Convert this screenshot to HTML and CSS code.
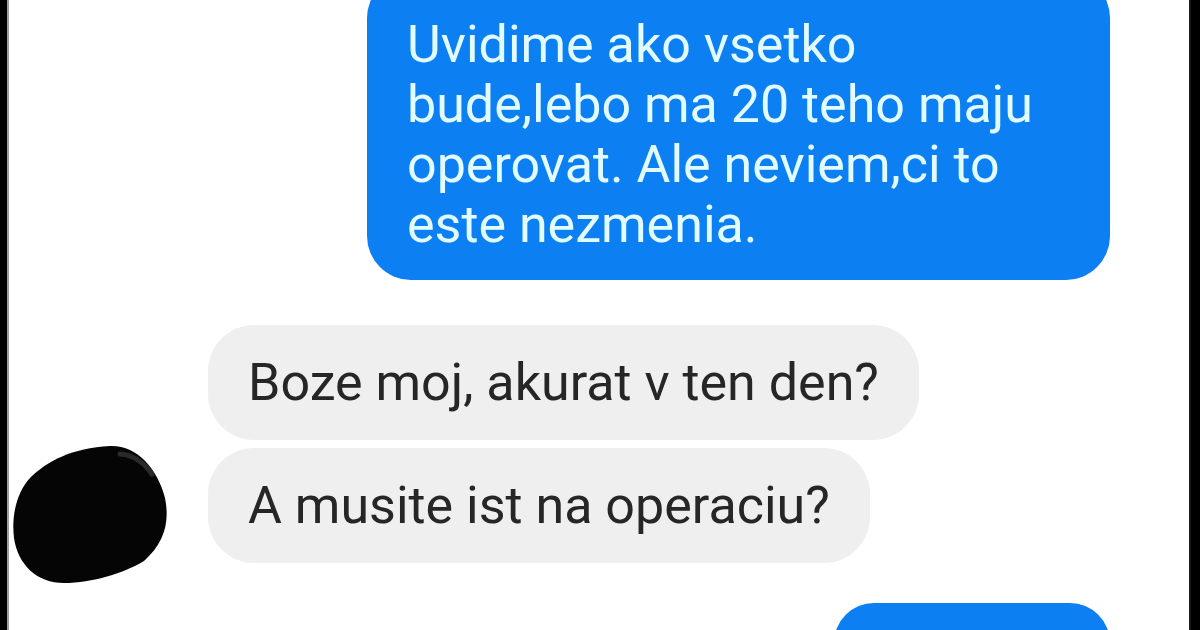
FILE: index.html
```html
<!DOCTYPE html>
<html lang="sk">
<head>
<meta charset="utf-8">
<link rel="stylesheet" href="styles.css">
</head>
<body>
<div class="frame">
  <div class="edge edge-left"></div>
  <main class="chat">
    <div class="row row-out">
      <div class="bubble bubble-out bubble-first">Uvidime ako vsetko<br>bude,lebo ma 20 teho maju<br>operovat. Ale neviem,ci to<br>este nezmenia.</div>
    </div>
    <div class="group-in">
      <svg class="avatar" viewBox="0 0 160 140" aria-hidden="true">
        <path d="M18 35 C35 18 60 5 98 3 C125 2 145 25 153 55 C158 80 152 100 132 118 C112 130 80 140 52 140 C25 140 6 122 2 95 C-1 70 6 48 18 35 Z" fill="#050505"/>
        <path d="M108 11 C122 12 134 21 141 33" stroke="#2a2a2a" stroke-width="5" fill="none" stroke-linecap="round" stroke-dasharray="4 3"/>
      </svg>
      <div class="bubbles-in">
        <div class="bubble bubble-in">Boze moj, akurat v ten den?</div>
        <div class="bubble bubble-in">A musite ist na operaciu?</div>
      </div>
    </div>
    <div class="row row-out">
      <div class="bubble bubble-out bubble-last">&nbsp;</div>
    </div>
  </main>
  <div class="edge edge-right"></div>
</div>
</body>
</html>
```

FILE: styles.css
```css
* { box-sizing: border-box; }
html, body { margin: 0; padding: 0; }
body {
  width: 1200px;
  height: 630px;
  overflow: hidden;
  background: #fff;
  font-family: Roboto, "Liberation Sans", sans-serif;
}
.frame {
  display: flex;
  height: 630px;
}
.edge { flex: none; background: #000; }
.edge-left { width: 9px; border-right: 2px solid #a0a0a0; }
.edge-right { width: 11px; border-left: 2px solid #1a1a1a; }
.chat {
  flex: 1;
  display: flex;
  flex-direction: column;
  overflow: hidden;
}
.row { display: flex; }
.row-out { justify-content: flex-end; padding-right: 79px; }
.bubble {
  font-size: 52px;
  line-height: 60px;
}
.bubble-out {
  background: #0c80f2;
  color: #e2fbff;
}
.bubble-first {
  margin-top: -26px;
  width: 743px;
  padding: 41px 40px 25px 40px;
  border-radius: 44px;
}
.group-in {
  display: flex;
  align-items: flex-end;
  margin-top: 45px;
}
.avatar {
  flex: none;
  width: 160px;
  height: 140px;
  margin: 0 36px 0 3px;
  overflow: visible;
  position: relative;
  top: 20px;
}
.bubbles-in {
  display: flex;
  flex-direction: column;
  align-items: flex-start;
  gap: 8px;
}
.bubble-in {
  background: #efefef;
  color: #262626;
  padding: 28px 40px 27px 40px;
  border-radius: 46px;
}
.bubble-last {
  margin-top: 40px;
  width: 276px;
  height: 80px;
  border-radius: 40px;
}
```
